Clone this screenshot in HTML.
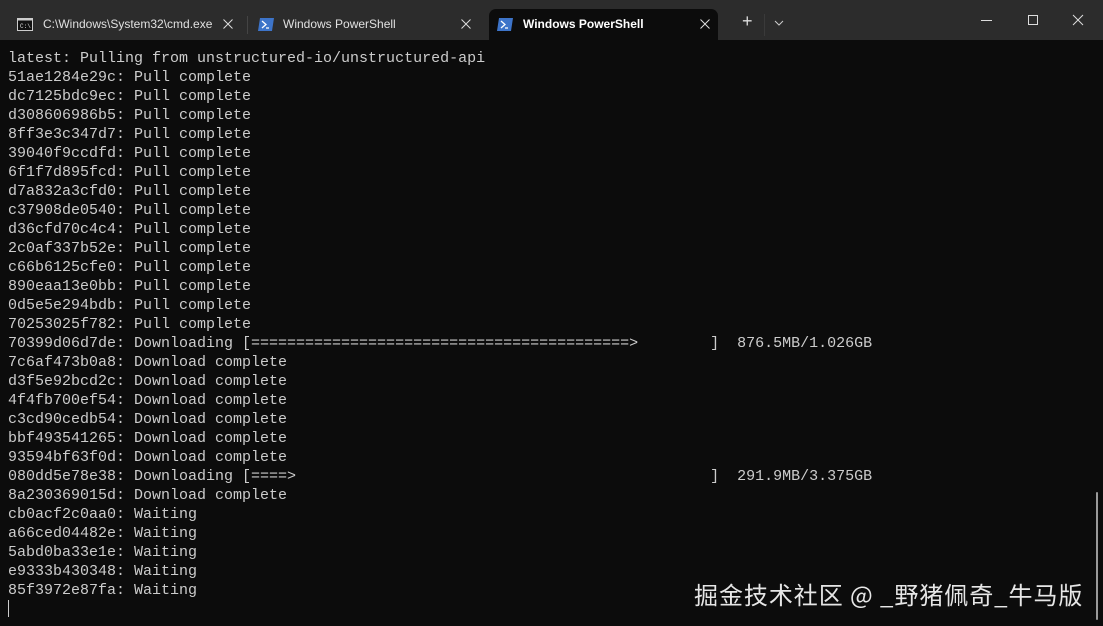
<!DOCTYPE html>
<html><head><meta charset="utf-8"><style>
*{margin:0;padding:0;box-sizing:border-box}
body{width:1103px;height:626px;background:#0c0c0c;overflow:hidden;position:relative;font-family:"Liberation Sans",sans-serif}
#bar{position:absolute;left:0;top:0;width:1103px;height:40px;background:#2c2c2c}
.tab{position:absolute;top:9px;height:31px;color:#e0e0e0;font-size:12px;line-height:31px}
.act{background:#0c0c0c;border-radius:7px 7px 0 0;color:#fff;font-weight:bold}
.x{position:absolute;top:10px}
pre{position:absolute;left:8px;top:49px;font-family:"Liberation Mono",monospace;font-size:15px;line-height:19px;color:#cccccc}
.wm{position:absolute;left:694px;top:576px;font-family:"Noto Sans CJK SC",sans-serif;font-size:24px;color:#e6e6e6;letter-spacing:0.95px}
</style></head><body>
<div id="bar">
 <div class="tab" style="left:8px;width:228px">
  <svg style="position:absolute;left:9px;top:9px" width="16" height="13"><rect x="0.5" y="0.5" width="15" height="12" fill="#111" stroke="#ccc"/><rect x="0.5" y="0.5" width="15" height="2" fill="#ccc"/><text x="3" y="10" font-size="6" fill="#ddd" font-family="Liberation Mono">C:\</text></svg>
  <span style="position:absolute;left:35px">C:\Windows\System32\cmd.exe</span>
  <svg class="x" style="left:215px" width="10" height="10"><path d="M0.5 0.5L9.5 9.5M9.5 0.5L0.5 9.5" stroke="#ddd"/></svg>
 </div>
 <div style="position:absolute;left:247px;top:16px;width:1px;height:18px;background:#444"></div>
 <div class="tab" style="left:250px;width:235px">
  <svg style="position:absolute;left:8px;top:9px" width="16" height="13"><path d="M2 0H16L14 13H0Z" fill="#3d74c9"/><path d="M4 3L8 6.5L4 10M8 10H11" stroke="#fff" stroke-width="1.3" fill="none"/></svg>
  <span style="position:absolute;left:33px">Windows PowerShell</span>
  <svg class="x" style="left:211px" width="10" height="10"><path d="M0.5 0.5L9.5 9.5M9.5 0.5L0.5 9.5" stroke="#ddd"/></svg>
 </div>
 <div class="tab act" style="left:489px;width:229px">
  <svg style="position:absolute;left:8px;top:9px" width="16" height="13"><path d="M2 0H16L14 13H0Z" fill="#3d74c9"/><path d="M4 3L8 6.5L4 10M8 10H11" stroke="#fff" stroke-width="1.3" fill="none"/></svg>
  <span style="position:absolute;left:34px">Windows PowerShell</span>
  <svg class="x" style="left:211px" width="10" height="10"><path d="M0.5 0.5L9.5 9.5M9.5 0.5L0.5 9.5" stroke="#ddd"/></svg>
 </div>
 <span style="position:absolute;left:742px;top:11px;color:#ddd;font-size:18px">+</span>
 <div style="position:absolute;left:764px;top:14px;width:1px;height:22px;background:#3a3a3a"></div>
 <svg style="position:absolute;left:774px;top:20px" width="10" height="6"><path d="M1 1L5 5L9 1" stroke="#ccc" fill="none"/></svg>
 <div style="position:absolute;left:981px;top:20px;width:11px;height:1px;background:#ddd"></div>
 <div style="position:absolute;left:1028px;top:15px;width:10px;height:10px;border:1px solid #ddd"></div>
 <svg style="position:absolute;left:1072px;top:14px" width="12" height="12"><path d="M1 1L11 11M11 1L1 11" stroke="#ddd"/></svg>
</div>
<pre>latest: Pulling from unstructured-io/unstructured-api
51ae1284e29c: Pull complete
dc7125bdc9ec: Pull complete
d308606986b5: Pull complete
8ff3e3c347d7: Pull complete
39040f9ccdfd: Pull complete
6f1f7d895fcd: Pull complete
d7a832a3cfd0: Pull complete
c37908de0540: Pull complete
d36cfd70c4c4: Pull complete
2c0af337b52e: Pull complete
c66b6125cfe0: Pull complete
890eaa13e0bb: Pull complete
0d5e5e294bdb: Pull complete
70253025f782: Pull complete
70399d06d7de: Downloading [==========================================>        ]  876.5MB/1.026GB
7c6af473b0a8: Download complete
d3f5e92bcd2c: Download complete
4f4fb700ef54: Download complete
c3cd90cedb54: Download complete
bbf493541265: Download complete
93594bf63f0d: Download complete
080dd5e78e38: Downloading [====>                                              ]  291.9MB/3.375GB
8a230369015d: Download complete
cb0acf2c0aa0: Waiting
a66ced04482e: Waiting
5abd0ba33e1e: Waiting
e9333b430348: Waiting
85f3972e87fa: Waiting</pre>
<div style="position:absolute;left:8px;top:600px;width:1px;height:17px;background:#ccc"></div>
<div style="position:absolute;left:1096px;top:492px;width:2px;height:128px;background:#9a9a9a;border-radius:1px"></div>
<div class="wm">掘金技术社区 @ _野猪佩奇_牛马版</div>
</body></html>
